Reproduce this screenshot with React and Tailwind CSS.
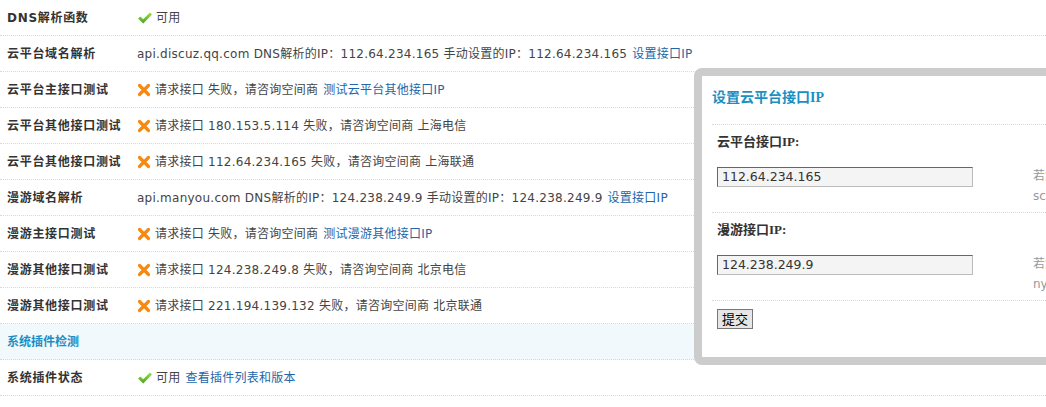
import React from "react";

const font = "font-['DejaVu_Sans','Noto_Sans_CJK_SC',sans-serif]";

function CheckIcon() {
  return (
    <svg width="16" height="14" viewBox="0 0 16 14" className="mr-[3px] shrink-0">
      <defs>
        <linearGradient id="okg" x1="0" y1="0" x2="0" y2="1">
          <stop offset="0" stopColor="#9be24a" />
          <stop offset="1" stopColor="#46a41f" />
        </linearGradient>
      </defs>
      <path d="M1 7.5 L3.5 5.5 L6.2 8.2 L12.8 1.5 L15 3.6 L6.3 12.6 Z" fill="url(#okg)" />
    </svg>
  );
}

function CrossIcon() {
  return (
    <svg width="14" height="14" viewBox="0 0 14 14" className="mr-[4px] shrink-0">
      <path d="M2.5 2.5 L11.5 11.5 M11.5 2.5 L2.5 11.5" stroke="#f7890f" strokeWidth="3.2" strokeLinecap="round" />
    </svg>
  );
}

function Link({ children }) {
  return <a className="text-[#2366a8] ml-[5px]">{children}</a>;
}

const rows = [
  { label: "DNS解析函数", icon: "ok", text: "可用" },
  {
    label: "云平台域名解析",
    text: "api.discuz.qq.com DNS解析的IP：112.64.234.165 手动设置的IP：112.64.234.165",
    link: "设置接口IP",
  },
  { label: "云平台主接口测试", icon: "no", text: "请求接口 失败，请咨询空间商", link: "测试云平台其他接口IP" },
  { label: "云平台其他接口测试", icon: "no", text: "请求接口 180.153.5.114 失败，请咨询空间商 上海电信" },
  { label: "云平台其他接口测试", icon: "no", text: "请求接口 112.64.234.165 失败，请咨询空间商 上海联通" },
  {
    label: "漫游域名解析",
    text: "api.manyou.com DNS解析的IP：124.238.249.9 手动设置的IP：124.238.249.9",
    link: "设置接口IP",
  },
  { label: "漫游主接口测试", icon: "no", text: "请求接口 失败，请咨询空间商", link: "测试漫游其他接口IP" },
  { label: "漫游其他接口测试", icon: "no", text: "请求接口 124.238.249.8 失败，请咨询空间商 北京电信" },
  { label: "漫游其他接口测试", icon: "no", text: "请求接口 221.194.139.132 失败，请咨询空间商 北京联通" },
  { section: "系统插件检测" },
  { label: "系统插件状态", icon: "ok", text: "可用", link: "查看插件列表和版本" },
];

function Row({ row }) {
  if (row.section) {
    return (
      <div className="h-[36px] flex items-center pl-[7px] bg-[#f2f9fd] border-b border-dotted border-[#d8d8d8]">
        <span className="font-bold text-[#1a8fc4]">{row.section}</span>
      </div>
    );
  }
  return (
    <div className="h-[36px] flex items-center border-b border-dotted border-[#d8d8d8] whitespace-nowrap">
      <div className="w-[137px] pl-[7px] font-bold text-[#333] tracking-[0.7px]">{row.label}</div>
      <div className="flex items-center text-[#444] tracking-[0.25px]">
        {row.icon === "ok" && <CheckIcon />}
        {row.icon === "no" && <CrossIcon />}
        <span>{row.text}</span>
        {row.link && <Link>{row.link}</Link>}
      </div>
    </div>
  );
}

function Field({ label, value, hint1, hint2 }) {
  return (
    <div className="border-b border-dotted border-[#d8d8d8] h-[88px] pl-[5px] pt-[8px]">
      <div className="h-[18px] leading-[18px] font-bold text-[#333] font-['Liberation_Serif','Noto_Sans_CJK_SC',serif] text-[13px]">
        {label}
      </div>
      <div className="flex mt-[16px]">
        <div className="w-[256px] shrink-0 h-[20px] border border-[#666] border-r-[#bbb] border-b-[#bbb] bg-[#f4f4f4] pl-[4px] leading-[18px] text-[#333] text-[12.5px]">
          {value}
        </div>
        <div className="ml-[60px] shrink-0 -mt-[1px] text-[#999] leading-[20px] whitespace-nowrap">
          <div>{hint1}</div>
          <div>{hint2}</div>
        </div>
      </div>
    </div>
  );
}

export default function App() {
  return (
    <div className={`relative overflow-hidden bg-white text-[12px] ${font}`}>
      {rows.map((row, i) => (
        <Row key={i} row={row} />
      ))}

      <div className="absolute left-[694px] top-[68px] w-[420px] border-[8px] border-[#cccccc] rounded-[8px] bg-white overflow-hidden">
        <div className="pl-[10px] pb-[10px]">
          <div className="h-[49px] flex items-center border-b border-dotted border-[#d8d8d8]">
            <span className="font-bold text-[#1a8fc4] text-[14px] font-['Liberation_Serif','Noto_Sans_CJK_SC',serif] -mt-[6px]">
              设置云平台接口IP
            </span>
          </div>
          <Field label="云平台接口IP:" value="112.64.234.165" hint1="若您" hint2="scuz" />
          <Field label="漫游接口IP:" value="124.238.249.9" hint1="若您" hint2="nyou" />
          <div className="pt-[8px] pl-[5px] h-[46px]">
            <button className="h-[20px] w-[36px] border border-[#777] bg-[#e6e6e6] text-[13px] text-black leading-[18px] font-['Noto_Sans_CJK_SC',sans-serif]">
              提交
            </button>
          </div>
        </div>
      </div>
    </div>
  );
}
